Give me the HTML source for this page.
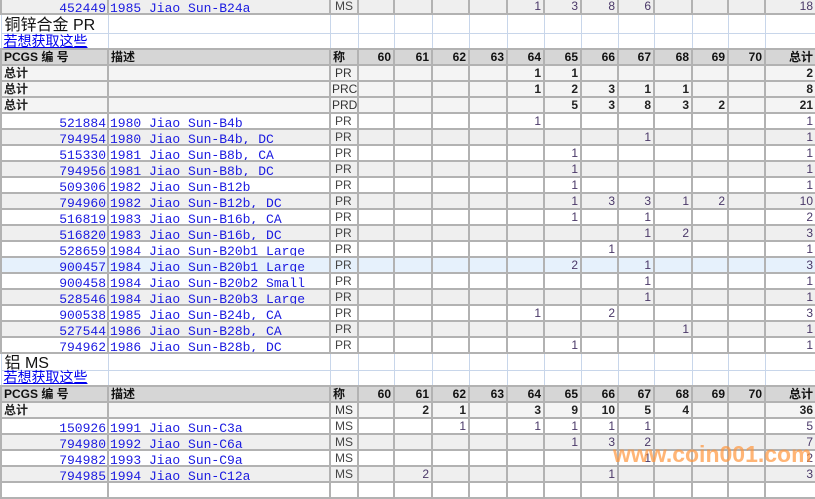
<!DOCTYPE html>
<html><head><meta charset="utf-8"><style>
body{margin:0;width:815px;height:483px;overflow:hidden;background:#fff;font-family:"Liberation Sans","Noto Sans CJK SC",sans-serif;font-size:12px;position:relative}
table{border-collapse:collapse;table-layout:fixed;width:815px;position:absolute;left:0;top:-3px}
td{border:2px solid #b2b2b2;padding:0 2px 0 2px;height:14px;line-height:14px;overflow:hidden;white-space:nowrap;text-align:right;color:#4a3868;vertical-align:bottom}
td.c{text-align:left;color:#1a1ae0;font-family:"Liberation Mono",monospace;font-size:13px;padding:0 0 0 1px}
td.n{font-family:"Liberation Mono",monospace;font-size:13px;color:#1a1ae0;padding:0 1px 0 0}
.in{height:14px;overflow:hidden;line-height:19px}
td.g{text-align:left;color:#444;padding-left:4px}
tr.w td{background:#fff}
tr.y td{background:#efefef}
tr.b td{background:#e6f1fc}
tr.t td{background:#f4f4f4;font-weight:bold;color:#222}
tr.t td.g{font-weight:normal;color:#333}
tr.h td{background:#d6d6d6;font-weight:bold;color:#111}
tr.e td{border:1px solid #c8d6ea;background:#fff}
td.o{overflow:visible}
td.l{text-align:left;font-weight:bold;color:#222}
.ttl{font-size:16px;color:#111;position:absolute;left:3px;line-height:18px}
.lnk{font-size:14px;color:#0000ee;text-decoration:underline;position:absolute;left:2px;line-height:16px}
.wm{position:absolute;left:613px;top:441px;font-size:23px;font-weight:bold;color:rgba(255,150,60,0.7)}
</style></head><body>
<table>
<colgroup><col style="width:107px"><col style="width:222px"><col style="width:28px"><col style="width:36px"><col style="width:38px"><col style="width:37px"><col style="width:38px"><col style="width:37px"><col style="width:37px"><col style="width:37px"><col style="width:36px"><col style="width:38px"><col style="width:36px"><col style="width:37px"><col style="width:51px"></colgroup>
<tr class="d y"><td class="n"><div class="in">452449</div></td><td class="c"><div class="in">1985 Jiao Sun-B24a</div></td><td class="g">MS</td><td></td><td></td><td></td><td></td><td>1</td><td>3</td><td>8</td><td>6</td><td></td><td></td><td></td><td>18</td></tr>
<tr class="e"><td class="o" style="height:18px;position:relative;text-align:left"><span class="ttl" style="top:2px">铜锌合金&nbsp;PR</span></td><td></td><td></td><td></td><td></td><td></td><td></td><td></td><td></td><td></td><td></td><td></td><td></td><td></td><td></td></tr>
<tr class="e"><td class="o" style="height:14px;position:relative"><span class="lnk" style="top:-1px">若想获取这些</span></td><td></td><td></td><td></td><td></td><td></td><td></td><td></td><td></td><td></td><td></td><td></td><td></td><td></td><td></td></tr>
<tr class="h"><td class="l">PCGS 编 号</td><td class="l">描述</td><td class="l">称</td><td>60</td><td>61</td><td>62</td><td>63</td><td>64</td><td>65</td><td>66</td><td>67</td><td>68</td><td>69</td><td>70</td><td>总计</td></tr>
<tr class="t"><td class="l">总计</td><td></td><td class="g">PR</td><td></td><td></td><td></td><td></td><td>1</td><td>1</td><td></td><td></td><td></td><td></td><td></td><td>2</td></tr>
<tr class="t"><td class="l">总计</td><td></td><td class="g" style="padding-left:1px">PRC</td><td></td><td></td><td></td><td></td><td>1</td><td>2</td><td>3</td><td>1</td><td>1</td><td></td><td></td><td>8</td></tr>
<tr class="t"><td class="l">总计</td><td></td><td class="g" style="padding-left:1px">PRD</td><td></td><td></td><td></td><td></td><td></td><td>5</td><td>3</td><td>8</td><td>3</td><td>2</td><td></td><td>21</td></tr>
<tr class="d w"><td class="n"><div class="in">521884</div></td><td class="c"><div class="in">1980 Jiao Sun-B4b</div></td><td class="g">PR</td><td></td><td></td><td></td><td></td><td>1</td><td></td><td></td><td></td><td></td><td></td><td></td><td>1</td></tr>
<tr class="d y"><td class="n"><div class="in">794954</div></td><td class="c"><div class="in">1980 Jiao Sun-B4b, DC</div></td><td class="g">PR</td><td></td><td></td><td></td><td></td><td></td><td></td><td></td><td>1</td><td></td><td></td><td></td><td>1</td></tr>
<tr class="d w"><td class="n"><div class="in">515330</div></td><td class="c"><div class="in">1981 Jiao Sun-B8b, CA</div></td><td class="g">PR</td><td></td><td></td><td></td><td></td><td></td><td>1</td><td></td><td></td><td></td><td></td><td></td><td>1</td></tr>
<tr class="d y"><td class="n"><div class="in">794956</div></td><td class="c"><div class="in">1981 Jiao Sun-B8b, DC</div></td><td class="g">PR</td><td></td><td></td><td></td><td></td><td></td><td>1</td><td></td><td></td><td></td><td></td><td></td><td>1</td></tr>
<tr class="d w"><td class="n"><div class="in">509306</div></td><td class="c"><div class="in">1982 Jiao Sun-B12b</div></td><td class="g">PR</td><td></td><td></td><td></td><td></td><td></td><td>1</td><td></td><td></td><td></td><td></td><td></td><td>1</td></tr>
<tr class="d y"><td class="n"><div class="in">794960</div></td><td class="c"><div class="in">1982 Jiao Sun-B12b, DC</div></td><td class="g">PR</td><td></td><td></td><td></td><td></td><td></td><td>1</td><td>3</td><td>3</td><td>1</td><td>2</td><td></td><td>10</td></tr>
<tr class="d w"><td class="n"><div class="in">516819</div></td><td class="c"><div class="in">1983 Jiao Sun-B16b, CA</div></td><td class="g">PR</td><td></td><td></td><td></td><td></td><td></td><td>1</td><td></td><td>1</td><td></td><td></td><td></td><td>2</td></tr>
<tr class="d y"><td class="n"><div class="in">516820</div></td><td class="c"><div class="in">1983 Jiao Sun-B16b, DC</div></td><td class="g">PR</td><td></td><td></td><td></td><td></td><td></td><td></td><td></td><td>1</td><td>2</td><td></td><td></td><td>3</td></tr>
<tr class="d w"><td class="n"><div class="in">528659</div></td><td class="c"><div class="in">1984 Jiao Sun-B20b1 Large</div></td><td class="g">PR</td><td></td><td></td><td></td><td></td><td></td><td></td><td>1</td><td></td><td></td><td></td><td></td><td>1</td></tr>
<tr class="d b"><td class="n"><div class="in">900457</div></td><td class="c"><div class="in">1984 Jiao Sun-B20b1 Large</div></td><td class="g">PR</td><td></td><td></td><td></td><td></td><td></td><td>2</td><td></td><td>1</td><td></td><td></td><td></td><td>3</td></tr>
<tr class="d w"><td class="n"><div class="in">900458</div></td><td class="c"><div class="in">1984 Jiao Sun-B20b2 Small</div></td><td class="g">PR</td><td></td><td></td><td></td><td></td><td></td><td></td><td></td><td>1</td><td></td><td></td><td></td><td>1</td></tr>
<tr class="d y"><td class="n"><div class="in">528546</div></td><td class="c"><div class="in">1984 Jiao Sun-B20b3 Large</div></td><td class="g">PR</td><td></td><td></td><td></td><td></td><td></td><td></td><td></td><td>1</td><td></td><td></td><td></td><td>1</td></tr>
<tr class="d w"><td class="n"><div class="in">900538</div></td><td class="c"><div class="in">1985 Jiao Sun-B24b, CA</div></td><td class="g">PR</td><td></td><td></td><td></td><td></td><td>1</td><td></td><td>2</td><td></td><td></td><td></td><td></td><td>3</td></tr>
<tr class="d y"><td class="n"><div class="in">527544</div></td><td class="c"><div class="in">1986 Jiao Sun-B28b, CA</div></td><td class="g">PR</td><td></td><td></td><td></td><td></td><td></td><td></td><td></td><td></td><td>1</td><td></td><td></td><td>1</td></tr>
<tr class="d w"><td class="n"><div class="in">794962</div></td><td class="c"><div class="in">1986 Jiao Sun-B28b, DC</div></td><td class="g">PR</td><td></td><td></td><td></td><td></td><td></td><td>1</td><td></td><td></td><td></td><td></td><td></td><td>1</td></tr>
<tr class="e"><td class="o" style="height:16px;position:relative"><span class="ttl" style="top:1px">铝&nbsp;MS</span></td><td></td><td></td><td></td><td></td><td></td><td></td><td></td><td></td><td></td><td></td><td></td><td></td><td></td><td></td></tr>
<tr class="e"><td class="o" style="height:13px;position:relative"><span class="lnk" style="top:-2px">若想获取这些</span></td><td></td><td></td><td></td><td></td><td></td><td></td><td></td><td></td><td></td><td></td><td></td><td></td><td></td><td></td></tr>
<tr class="h"><td class="l">PCGS 编 号</td><td class="l">描述</td><td class="l">称</td><td>60</td><td>61</td><td>62</td><td>63</td><td>64</td><td>65</td><td>66</td><td>67</td><td>68</td><td>69</td><td>70</td><td>总计</td></tr>
<tr class="t"><td class="l">总计</td><td></td><td class="g">MS</td><td></td><td>2</td><td>1</td><td></td><td>3</td><td>9</td><td>10</td><td>5</td><td>4</td><td></td><td></td><td>36</td></tr>
<tr class="d w"><td class="n"><div class="in">150926</div></td><td class="c"><div class="in">1991 Jiao Sun-C3a</div></td><td class="g">MS</td><td></td><td></td><td>1</td><td></td><td>1</td><td>1</td><td>1</td><td>1</td><td></td><td></td><td></td><td>5</td></tr>
<tr class="d y"><td class="n"><div class="in">794980</div></td><td class="c"><div class="in">1992 Jiao Sun-C6a</div></td><td class="g">MS</td><td></td><td></td><td></td><td></td><td></td><td>1</td><td>3</td><td>2</td><td></td><td></td><td></td><td>7</td></tr>
<tr class="d w"><td class="n"><div class="in">794982</div></td><td class="c"><div class="in">1993 Jiao Sun-C9a</div></td><td class="g">MS</td><td></td><td></td><td></td><td></td><td></td><td></td><td></td><td>1</td><td></td><td></td><td></td><td>2</td></tr>
<tr class="d y"><td class="n"><div class="in">794985</div></td><td class="c"><div class="in">1994 Jiao Sun-C12a</div></td><td class="g">MS</td><td></td><td>2</td><td></td><td></td><td></td><td></td><td>1</td><td></td><td></td><td></td><td></td><td>3</td></tr>
<tr class="d w"><td></td><td></td><td></td><td></td><td></td><td></td><td></td><td></td><td></td><td></td><td></td><td></td><td></td><td></td><td></td></tr>
</table>
<div class="wm">www.coin001.com</div>
</body></html>
